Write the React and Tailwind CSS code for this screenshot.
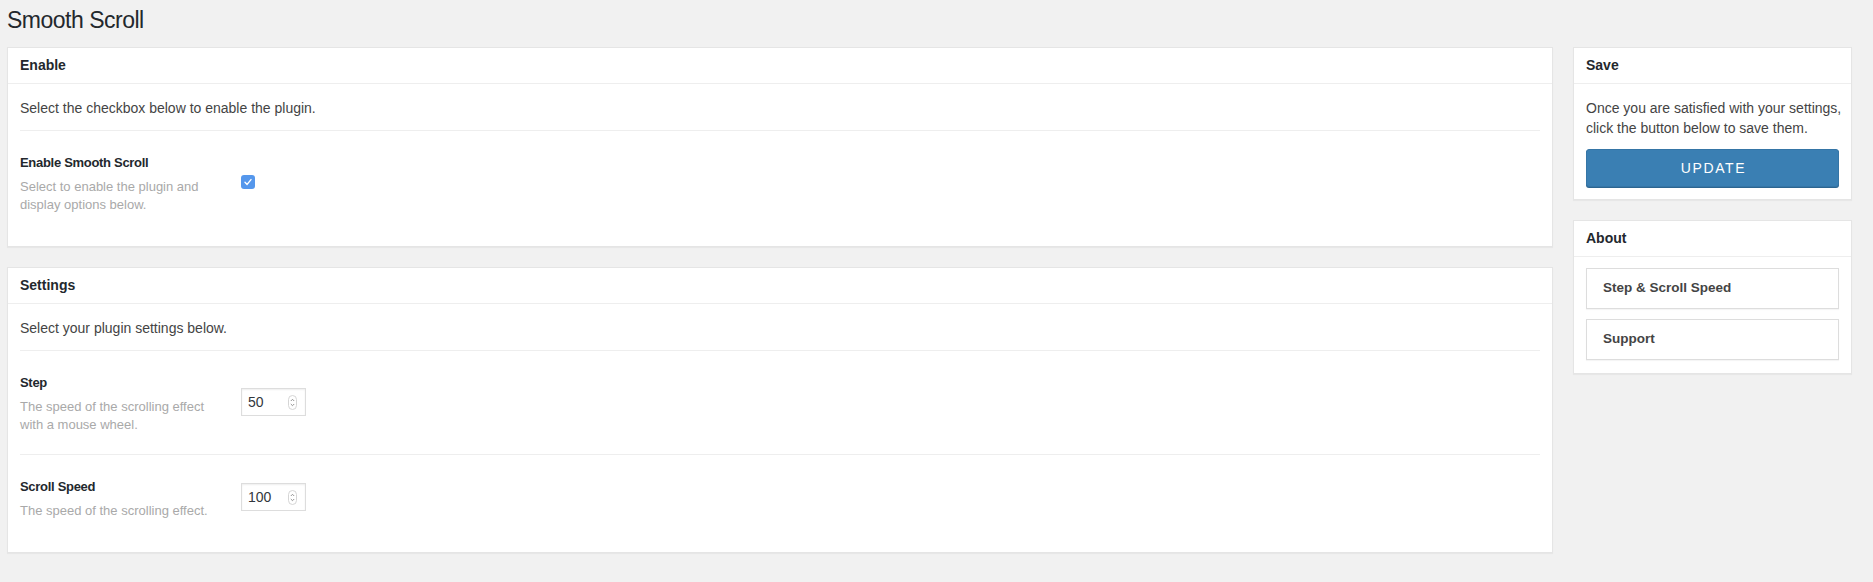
const ROWS_SETTINGS = [
  {
    label: "Step",
    desc: "The speed of the scrolling effect with a mouse wheel.",
    value: "50",
  },
  {
    label: "Scroll Speed",
    desc: "The speed of the scrolling effect.",
    value: "100",
  },
];

function Card({ title, children }) {
  return (
    <div className="bg-white border border-[#e5e5e5] shadow-[0_1px_1px_rgba(0,0,0,0.04)]">
      <div className="h-[36px] px-[12px] flex items-center border-b border-[#eee] text-[14px] font-bold text-[#23282d]">
        {title}
      </div>
      {children}
    </div>
  );
}

function Row({ label, desc, last, children }) {
  return (
    <div
      className={`flex items-center pt-[23px] pb-[20px] ${
        last ? "" : "border-b border-[#eee]"
      }`}
    >
      <div className="w-[221px] shrink-0">
        <div className="text-[13px] leading-[18px] font-bold tracking-[-0.3px] text-[#23282d]">
          {label}
        </div>
        <div className="mt-[6px] max-w-[200px] text-[13px] leading-[18px] text-[#a9a9a9]">
          {desc}
        </div>
      </div>
      <div className="mb-[4px]">{children}</div>
    </div>
  );
}

function Checkbox() {
  return (
    <div className="w-[14px] h-[14px] rounded-[3px] bg-[#5597ec] flex items-center justify-center">
      <svg width="10" height="10" viewBox="0 0 10 10">
        <path
          d="M2 5.3 L4.1 7.4 L8 2.6"
          fill="none"
          stroke="white"
          strokeWidth="1.4"
          strokeLinecap="round"
          strokeLinejoin="round"
        />
      </svg>
    </div>
  );
}

function NumberInput({ value }) {
  return (
    <div className="w-[65px] h-[28px] border border-[#ddd] shadow-[inset_0_1px_2px_rgba(0,0,0,0.07)] flex items-center justify-between pl-[6px] pr-[8px]">
      <span className="text-[14px] text-[#32373c]">{value}</span>
      <svg width="9" height="15" viewBox="0 0 9 15">
        <rect x="0.5" y="0.5" width="8" height="14" rx="4" fill="white" stroke="#d5d5d5" />
        <path d="M2.8 6 L4.5 4.3 L6.2 6" fill="none" stroke="#888" strokeWidth="0.9" />
        <path d="M2.8 9 L4.5 10.7 L6.2 9" fill="none" stroke="#888" strokeWidth="0.9" />
      </svg>
    </div>
  );
}

export default function App() {
  return (
    <div className="min-h-screen bg-[#f1f1f1] font-['Liberation_Sans',Arial,sans-serif] text-[#444]">
      <h1 className="h-[47px] px-[7px] pt-[6px] text-[23px] leading-[28px] tracking-[-0.5px] text-[#23282d]">
        Smooth Scroll
      </h1>
      <div className="flex gap-[20px] pl-[7px] pr-[21px]">
        {/* Main column */}
        <div className="flex-1 flex flex-col gap-[20px]">
          <Card title="Enable">
            <div className="px-[12px] pt-[14px] pb-[12px]">
              <p className="text-[14px] leading-[20px] pb-[12px] border-b border-[#eee]">
                Select the checkbox below to enable the plugin.
              </p>
              <Row
                label="Enable Smooth Scroll"
                desc="Select to enable the plugin and display options below."
                last
              >
                <Checkbox />
              </Row>
            </div>
          </Card>
          <Card title="Settings">
            <div className="px-[12px] pt-[14px] pb-[12px]">
              <p className="text-[14px] leading-[20px] pb-[12px] border-b border-[#eee]">
                Select your plugin settings below.
              </p>
              {ROWS_SETTINGS.map((row, i) => (
                <Row
                  key={row.label}
                  label={row.label}
                  desc={row.desc}
                  last={i === ROWS_SETTINGS.length - 1}
                >
                  <NumberInput value={row.value} />
                </Row>
              ))}
            </div>
          </Card>
        </div>

        {/* Sidebar */}
        <div className="w-[279px] shrink-0 flex flex-col gap-[20px]">
          <Card title="Save">
            <div className="px-[12px] pt-[14px] pb-[12px]">
              <p className="text-[14px] leading-[20px] whitespace-nowrap">
                Once you are satisfied with your settings,
                <br />
                click the button below to save them.
              </p>
              <button className="mt-[11px] w-full h-[38px] rounded-[3px] bg-[#3a7fb3] border border-[#3575a6] shadow-[0_1px_0_#2c6590] text-white text-[14px] tracking-[1.6px] pl-[2px]">
                UPDATE
              </button>
            </div>
          </Card>
          <Card title="About">
            <div className="px-[12px] pt-[11px] pb-[13px] flex flex-col gap-[10px]">
              {["Step & Scroll Speed", "Support"].map((item) => (
                <div
                  key={item}
                  className="h-[41px] border border-[#ddd] shadow-[0_1px_1px_rgba(0,0,0,0.04)] flex items-center pl-[16px] text-[13.5px] font-bold text-[#444]"
                >
                  {item}
                </div>
              ))}
            </div>
          </Card>
        </div>
      </div>
    </div>
  );
}
